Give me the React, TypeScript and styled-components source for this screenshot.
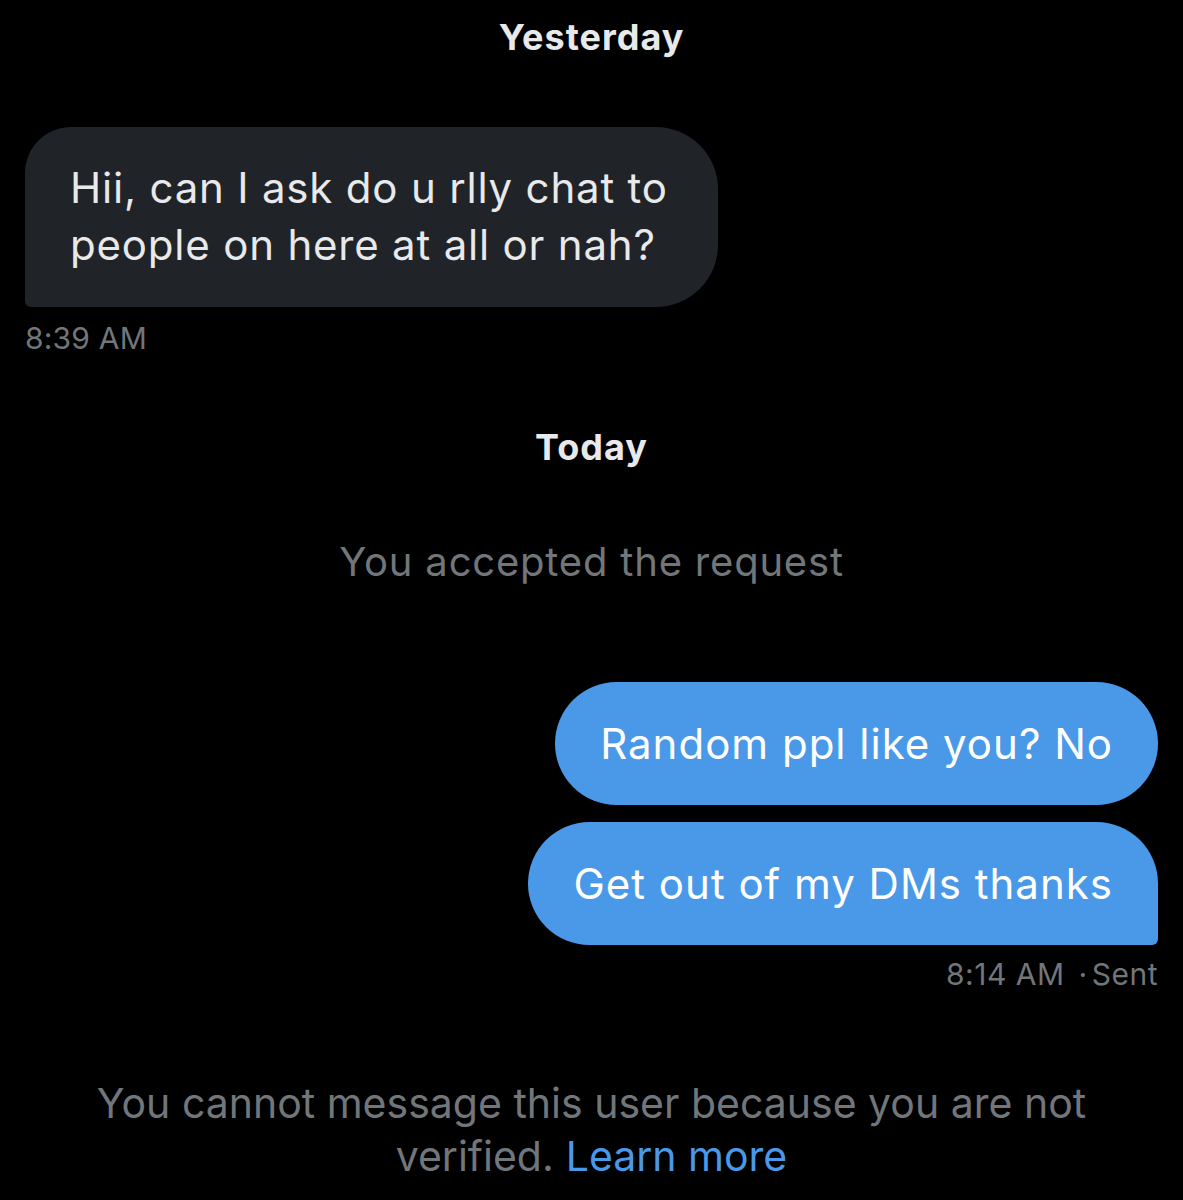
import React from 'react'
import styled, { createGlobalStyle } from 'styled-components'

const GlobalStyle = createGlobalStyle`
  html, body {
    margin: 0;
    padding: 0;
    background: #000;
  }
  body {
    font-family: Inter, "Noto Sans", "Liberation Sans", sans-serif;
    -webkit-font-smoothing: antialiased;
  }
`

const Screen = styled.div`
  width: 1183px;
  height: 1200px;
  background: #000;
  display: flex;
  flex-direction: column;
  padding: 0 25px;
  box-sizing: border-box;
  overflow: hidden;
`

const DayLabel = styled.div<{ $top: number }>`
  margin-top: ${p => p.$top}px;
  text-align: center;
  color: #e7e9ea;
  font-weight: 700;
  font-size: 36px;
  line-height: 40px;
  letter-spacing: 1px;
`

const Row = styled.div<{ $mine?: boolean; $top: number }>`
  display: flex;
  margin-top: ${p => p.$top}px;
  justify-content: ${p => (p.$mine ? 'flex-end' : 'flex-start')};
`

const Bubble = styled.div<{ $mine?: boolean; $tail?: boolean }>`
  box-sizing: border-box;
  font-size: 42px;
  line-height: 57px;
  color: ${p => (p.$mine ? '#ffffff' : '#e7e9ea')};
  background: ${p => (p.$mine ? '#4a99e9' : '#202327')};
  border-radius: ${p =>
    p.$mine
      ? p.$tail
        ? '62px 62px 6px 62px'
        : '62px'
      : '46px 62px 62px 6px'};
  padding: ${p => (p.$mine ? '33px 45px' : '32px 50px 34px 45px')};
  letter-spacing: ${p => (p.$mine ? '1px' : '0.8px')};
`

const Meta = styled.div<{ $mine?: boolean; $top: number }>`
  margin-top: ${p => p.$top}px;
  color: #71767b;
  font-size: 30px;
  line-height: 34px;
  text-align: ${p => (p.$mine ? 'right' : 'left')};
  letter-spacing: ${p => (p.$mine ? '0.5px' : '0.2px')};
`

const Dot = styled.span`
  margin: 0 4px 0 14px;
`

const Notice = styled.div<{ $top: number }>`
  margin-top: ${p => p.$top}px;
  text-align: center;
  color: #71767b;
  font-size: 40px;
  line-height: 50px;
  letter-spacing: 0.8px;
`

const Footer = styled.div`
  margin-top: 86px;
  display: flex;
  flex-direction: column;
  align-items: center;
  color: #71767b;
  font-size: 41px;
  line-height: 53px;
`

const FooterLine = styled.div`
  display: flex;
  gap: 12px;
  white-space: nowrap;
`

const Link = styled.a`
  color: #4a99e9;
  text-decoration: none;
`

export default function App() {
  return (
    <>
      <GlobalStyle />
      <Screen>
        <DayLabel $top={17}>Yesterday</DayLabel>

        <Row $top={70}>
          <Bubble>
            Hii, can I ask do u rlly chat to
            <br />
            people on here at all or nah?
          </Bubble>
        </Row>
        <Meta $top={14}>8:39 AM</Meta>

        <DayLabel $top={72}>Today</DayLabel>
        <Notice $top={70}>You accepted the request</Notice>

        <Row $mine $top={95}>
          <Bubble $mine>Random ppl like you? No</Bubble>
        </Row>
        <Row $mine $top={17}>
          <Bubble $mine $tail>Get out of my DMs thanks</Bubble>
        </Row>
        <Meta $mine $top={12}>
          8:14 AM<Dot>·</Dot>Sent
        </Meta>

        <Footer>
          <FooterLine>You cannot message this user because you are not</FooterLine>
          <FooterLine>
            <span>verified.</span>
            <Link href="#">Learn more</Link>
          </FooterLine>
        </Footer>
      </Screen>
    </>
  )
}
